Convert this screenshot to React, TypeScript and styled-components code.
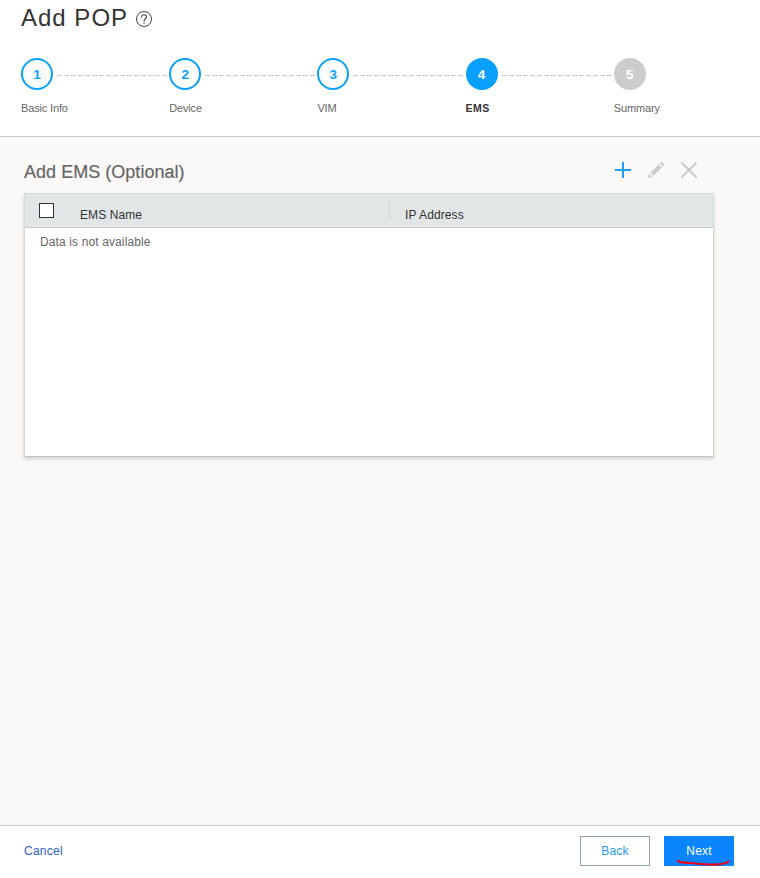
import React from "react";
import styled, { createGlobalStyle, css } from "styled-components";

const GlobalStyle = createGlobalStyle`
  * { box-sizing: border-box; }
  body {
    margin: 0;
    background: #faf9f7;
    font-family: "Liberation Sans", Arial, sans-serif;
  }
`;

const Page = styled.div`
  display: flex;
  flex-direction: column;
  width: 760px;
  height: 878px;
  background: #faf9f7;
  overflow: hidden;
`;

const Header = styled.header`
  height: 137px;
  flex: none;
  padding: 4px 0 0 21px;
  background: #fff;
  border-bottom: 1px solid #ccc;
`;

const TitleRow = styled.div`
  display: flex;
  align-items: center;
  height: 28px;
`;

const Title = styled.h1`
  margin: 0;
  width: 115px;
  font-size: 24px;
  line-height: 28px;
  font-weight: 400;
  letter-spacing: 1px;
  color: #333;
  white-space: nowrap;
`;

const HelpIcon = styled.svg`
  margin-top: 3px;
`;

const Steps = styled.ol`
  display: flex;
  list-style: none;
  margin: 26px 0 0;
  padding: 0;
`;

const Step = styled.li`
  width: 148.2px;
  flex: none;
`;

const Track = styled.div`
  display: flex;
  align-items: center;
  height: 32px;
`;

type StepState = "done" | "current" | "pending";

const circleColors = {
  done: css`
    border-color: #08a0ff;
    background: #fff;
    color: #08a0ff;
  `,
  current: css`
    border-color: #08a0ff;
    background: #08a0ff;
    color: #fff;
  `,
  pending: css`
    border-color: #ccc;
    background: #ccc;
    color: #fff;
  `,
};

const Circle = styled.div<{ $state: StepState }>`
  width: 32px;
  height: 32px;
  flex: none;
  border: 2px solid;
  border-radius: 50%;
  padding-top: 1px;
  font-size: 13.5px;
  line-height: 28px;
  font-weight: 700;
  text-align: center;
  ${(p) => circleColors[p.$state]}
`;

const Connector = styled.div`
  width: 110px;
  height: 1px;
  margin: 3px 0 0 4px;
  background: repeating-linear-gradient(90deg, #c8c8c8 0 5px, transparent 5px 7px);
`;

const StepLabel = styled.div<{ $current: boolean }>`
  margin-top: 12px;
  font-size: ${(p) => (p.$current ? "10.5px" : "11px")};
  line-height: 13px;
  letter-spacing: ${(p) => (p.$current ? "0.5px" : "-0.15px")};
  font-weight: ${(p) => (p.$current ? 700 : 400)};
  color: ${(p) => (p.$current ? "#333" : "#666")};
`;

const Content = styled.main`
  flex: 1;
  padding: 20px 46px 0 24px;
`;

const SectionBar = styled.div`
  display: flex;
  justify-content: space-between;
  height: 36px;
`;

const SectionTitle = styled.h2`
  margin: 4px 0 0;
  font-size: 18px;
  line-height: 22px;
  font-weight: 400;
  letter-spacing: 0.03px;
  color: #666;
  -webkit-text-stroke: 0.2px #666;
`;

const Tools = styled.div`
  display: flex;
  gap: 9px;
  padding: 1px 13px 0 0;
`;

const ToolButton = styled.button`
  width: 24px;
  height: 24px;
  padding: 0;
  border: 0;
  background: none;

  svg { display: block; }
`;

const Table = styled.section`
  height: 264px;
  background: #fff;
  border: 1px solid #d8dbdb;
  border-bottom-color: #c4c4c4;
  box-shadow: 0 2px 4px rgba(0, 0, 0, 0.16);
`;

const TableHead = styled.div`
  display: flex;
  height: 34px;
  background: #e2e6e6;
  border-bottom: 1px solid #c5c9cb;
`;

const CheckCell = styled.div`
  width: 39px;
  padding: 9px 0 0 14px;
`;

const Checkbox = styled.div`
  width: 15px;
  height: 15px;
  background: #fff;
  border: 1px solid #333;
`;

const HeadCell = styled.div<{ $width: number }>`
  width: ${(p) => p.$width}px;
  padding: 14px 0 0 16px;
  font-size: 12px;
  line-height: 14px;
  letter-spacing: 0.1px;
  color: #333;
`;

const Divider = styled.div`
  width: 1px;
  height: 22px;
  margin: 4px -1px 0 0;
  background: repeating-linear-gradient(#c3c8ca 0 1px, transparent 1px 2px);
`;

const EmptyRow = styled.div`
  padding: 7px 15px;
  font-size: 12px;
  line-height: 14px;
  letter-spacing: 0.12px;
  color: #666;
`;

const Footer = styled.footer`
  display: flex;
  align-items: flex-start;
  height: 53px;
  flex: none;
  padding: 10px 26px 0 24px;
  background: #fff;
  border-top: 1px solid #ccc;
`;

const Cancel = styled.a`
  margin-right: auto;
  font-size: 12px;
  line-height: 30px;
  letter-spacing: 0.25px;
  color: #2a62cc;
`;

const Button = styled.button<{ $primary?: boolean }>`
  position: relative;
  width: 70px;
  height: 30px;
  margin-left: 14px;
  padding: 0;
  border: 1px solid ${(p) => (p.$primary ? "#0a84ff" : "#90a4ae")};
  background: ${(p) => (p.$primary ? "#0a84ff" : "#fff")};
  color: ${(p) => (p.$primary ? "#fff" : "#1e98f5")};
  font: 12px/28px "Liberation Sans", Arial, sans-serif;
  letter-spacing: 0.15px;
`;

const Marker = styled.svg`
  position: absolute;
  left: 11px;
  top: 21px;
`;

const steps: { label: string; state: StepState }[] = [
  { label: "Basic Info", state: "done" },
  { label: "Device", state: "done" },
  { label: "VIM", state: "done" },
  { label: "EMS", state: "current" },
  { label: "Summary", state: "pending" },
];

export default function App() {
  return (
    <>
      <GlobalStyle />
      <Page>
        <Header>
          <TitleRow>
            <Title>Add POP</Title>
            <HelpIcon width="17" height="17" viewBox="0 0 17 17" fill="none" stroke="#444">
              <circle cx="8" cy="8" r="7.5" />
              <path d="M5.6 6.4V6C5.6 4.6 6.6 3.8 8 3.8s2.5.8 2.5 2.1c0 1.9-2.4 1.9-2.4 4v.5" strokeWidth="1.1" />
              <path d="M8.1 11.5v1.2" strokeWidth="1.2" />
            </HelpIcon>
          </TitleRow>
          <Steps>
            {steps.map((step, i) => (
              <Step key={step.label}>
                <Track>
                  <Circle $state={step.state}>{i + 1}</Circle>
                  {i < steps.length - 1 && <Connector />}
                </Track>
                <StepLabel $current={step.state === "current"}>{step.label}</StepLabel>
              </Step>
            ))}
          </Steps>
        </Header>
        <Content>
          <SectionBar>
            <SectionTitle>Add EMS (Optional)</SectionTitle>
            <Tools>
              <ToolButton aria-label="Add">
                <svg width="24" height="24" viewBox="0 0 24 24" stroke="#1e9fff" strokeWidth="2">
                  <path d="M4 12h16M12 4v16" />
                </svg>
              </ToolButton>
              <ToolButton aria-label="Edit">
                <svg width="24" height="24" viewBox="0 0 24 24" fill="#ccc">
                  <path d="M4 20l1.2-4.2 3 3zM6.3 14.8l8.400-8.400 3.200 3.100-8.500 8.300zM15.700 5.400l1-1c.5-.5 1.100-.5 1.600 0l1.500 1.500c.4.5.4 1 0 1.500l-1 1z" />
                </svg>
              </ToolButton>
              <ToolButton aria-label="Delete">
                <svg width="24" height="24" viewBox="0 0 24 24" stroke="#ccc" strokeWidth="2">
                  <path d="M4.5 4.5l15 15M19.5 4.5l-15 15" />
                </svg>
              </ToolButton>
            </Tools>
          </SectionBar>
          <Table>
            <TableHead>
              <CheckCell>
                <Checkbox role="checkbox" aria-checked="false" />
              </CheckCell>
              <HeadCell $width={325}>EMS Name</HeadCell>
              <Divider />
              <HeadCell $width={300}>IP Address</HeadCell>
            </TableHead>
            <EmptyRow>Data is not available</EmptyRow>
          </Table>
        </Content>
        <Footer>
          <Cancel>Cancel</Cancel>
          <Button>Back</Button>
          <Button $primary>
            Next
            <Marker width="56" height="12" viewBox="0 0 56 12" fill="none" stroke="#f00014" strokeWidth="2.2" strokeLinecap="round">
              <path d="M2 2.700C4 5 9 4.600 15 5c7 .7 15 2 24 1.600 6-.3 12-.8 13.500-3.300" />
            </Marker>
          </Button>
        </Footer>
      </Page>
    </>
  );
}
